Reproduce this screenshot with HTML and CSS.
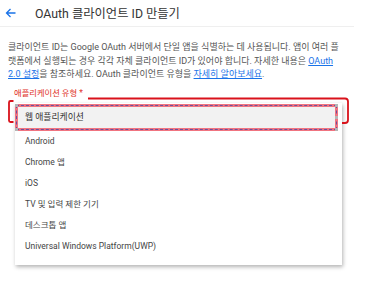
FILE: index.html
```html
<!DOCTYPE html>
<html lang="ko">
<head>
    <meta charset="UTF-8">
    <title>OAuth 클라이언트 ID 만들기</title>
    <link rel="stylesheet" href="styles.css">
</head>
<body>
    <div class="topbar">
        <svg class="back" width="11" height="10" viewBox="0 0 11 10">
            <path d="M10.5 5H1.5M5.5 1L1.5 5L5.5 9" fill="none" stroke="#1a73e8" stroke-width="1.3"/>
        </svg>
        <div class="title">OAuth 클라이언트 ID 만들기</div>
    </div>

    <p class="intro">
        클라이언트 ID는 Google OAuth 서버에서 단일 앱을 식별하는 데 사용됩니다. 앱이 여러 플랫폼에서 실행되는 경우 각각 자체 클라이언트 ID가 있어야 합니다. 자세한 내용은 <a href="#">OAuth 2.0 설정</a>을 참조하세요. OAuth 클라이언트 유형을 <a href="#">자세히 알아보세요</a>.
    </p>

    <div class="field">
        <div class="label">애플리케이션 유형 *</div>
        <div class="menu">
            <div class="option selected">
                웹 애플리케이션
                <span class="handle tl"></span>
                <span class="handle bl"></span>
                <span class="handle tr"></span>
                <span class="handle mr"></span>
                <span class="handle br"></span>
            </div>
            <div class="option">Android</div>
            <div class="option">Chrome 앱</div>
            <div class="option">iOS</div>
            <div class="option">TV 및 입력 제한 기기</div>
            <div class="option">데스크톱 앱</div>
            <div class="option">Universal Windows Platform(UWP)</div>
        </div>
    </div>

    <!-- 빨간 표시 -->
    <svg class="markup" width="368" height="283" viewBox="0 0 368 283">
        <path d="M13.5 101H10.5Q9 101 9 102.5V120.5Q9 122 10.5 122H13.5" fill="none" stroke="#d9121b" stroke-width="1.8"/>
        <path d="M88 98.5H345Q348 98.5 348 101.5V120Q348 123 345 123H342" fill="none" stroke="#d9121b" stroke-width="1.8"/>
    </svg>
</body>
</html>
```

FILE: styles.css
```css
body {
    margin: 0;
    font-family: 'Roboto', 'Noto Sans CJK KR', sans-serif;
    color: #444;
    background-color: #fff;
    position: relative;
    width: 368px;
    height: 283px;
    overflow: hidden;
}

.topbar {
    display: flex;
    align-items: center;
    width: 354px;
    height: 26px;
    border-bottom: 1px solid #efefef;
}

.back {
    margin-left: 5px;
    margin-right: 19px;
}

.title {
    font-size: 12.3px;
    color: #333;
}

.intro {
    margin: 14px 0 0 8px;
    width: 338px;
    font-size: 9px;
    line-height: 13.5px;
    color: #555;
}

.intro a {
    color: #1a73e8;
    text-decoration: underline;
}

.field {
    margin-top: 6px;
}

.label {
    margin-left: 14px;
    font-size: 8.3px;
    line-height: 11px;
    color: #e0301e;
}

.menu {
    margin: 4px 0 0 15px;
    width: 327px;
    padding: 1px 0 8px;
    background-color: #fff;
    box-shadow: 1px 2px 4px rgba(0, 0, 0, 0.3);
}

.option {
    height: 21px;
    line-height: 21px;
    padding-left: 10px;
    font-size: 8.5px;
    color: #444;
}

.option.selected {
    position: relative;
    box-sizing: border-box;
    height: 27px;
    line-height: 21px;
    margin-right: 4px;
    padding-left: 7px;
    font-size: 8.8px;
    color: #333;
    background-color: #f2f2f2;
    border: 3px solid #f07480;
    outline: 1px dashed #6d4f9e;
    outline-offset: -2px;
}

.handle {
    position: absolute;
    width: 3px;
    height: 3px;
    background-color: #b5b5b5;
}

.handle.tl { left: -3px; top: -3px; }
.handle.bl { left: -3px; bottom: -3px; }
.handle.tr { right: -3px; top: -3px; }
.handle.mr { right: -3px; top: 9px; }
.handle.br { right: -3px; bottom: -3px; }

.markup {
    position: absolute;
    left: 0;
    top: 0;
    pointer-events: none;
}
```
